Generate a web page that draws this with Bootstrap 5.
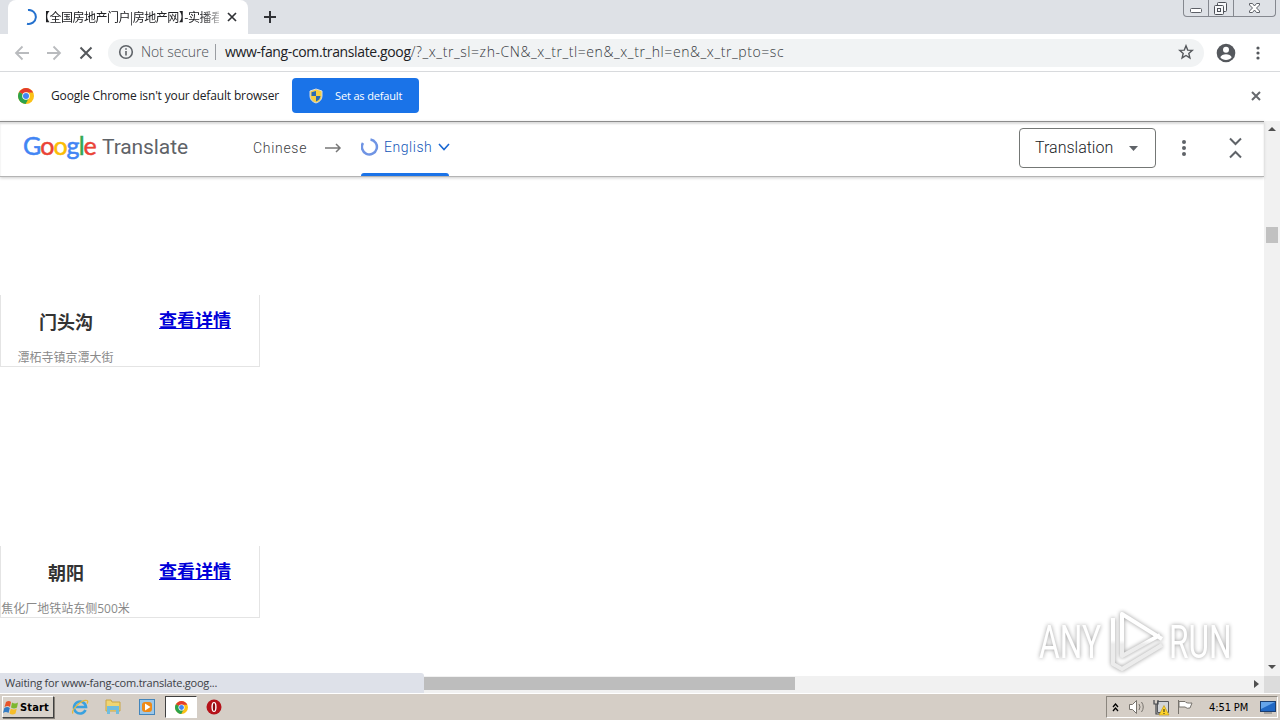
<!DOCTYPE html>
<html lang="en">
<head>
    <meta charset="UTF-8">
    <meta name="viewport" content="width=device-width, initial-scale=1.0">
    <title>Google Translate</title>
    <link href="https://cdn.jsdelivr.net/npm/bootstrap@5.3.0/dist/css/bootstrap.min.css" rel="stylesheet">
    <style>
        body { height: 720px; font-family: "Open Sans", "Noto Sans CJK SC", sans-serif; font-size: 12px; line-height: 1; color: #202124; }
        svg { display: block; flex: none; }
        .t { white-space: nowrap; flex: none; }

        /* browser frame */
        .tab-strip { height: 34px; background: #dee1e6; padding-left: 8px; }
        .tab { width: 240px; height: 34px; background: #fff; border-radius: 8px 8px 0 0; padding-left: 13px; }
        .tab-title { width: 175px; margin-left: 7px; font-family: "Noto Sans CJK SC", sans-serif; font-size: 12px; letter-spacing: -.5px; line-height: 18px; font-feature-settings: "halt"; -webkit-mask-image: linear-gradient(90deg, #000 90%, rgba(0, 0, 0, .3)); }
        .win-btns { height: 17px; margin-right: 4px; border: 1px solid #85888f; border-top: 0; border-radius: 0 0 4px 4px; }
        .win-btns > div + div { border-left: 1px solid #85888f; }
        .toolbar { height: 38px; border-bottom: 1px solid #d8dadd; }
        .omnibox { width: 1096px; height: 28px; border-radius: 14px; background: #f1f3f4; margin-left: 15px; padding: 0 10px 2px; font-size: 14px; line-height: 20px; }
        .sec { margin-left: 7px; width: 67px; color: #4c5055; font-weight: 300; letter-spacing: -.1px; }
        .sep { width: 1px; height: 16px; background: #9a9da2; margin: 0 9px 0 7px; }
        .host { letter-spacing: -.37px; }
        .query { color: #36393d; font-weight: 300; letter-spacing: .57px; }
        .infobar { height: 49px; padding-bottom: 2px; }
        .info { width: 229px; letter-spacing: -.15px; }
        .default-btn { width: 127px; height: 35px; background: #1a73e8; border-radius: 4px; color: #fff; font-size: 11px; letter-spacing: -.15px; padding: 0 0 0 16px; margin-left: 12px; }

        /* page */
        .viewport { height: 555px; }
        .translate-bar { height: 56px; border-top: 1px solid #8c8c8c; border-bottom: 1px solid #b4b4b4; box-shadow: inset 0 2px 2px #ddd, 0 1px 3px #ccc; padding-bottom: 2px; font-family: Roboto, sans-serif; color: #5f6368; }
        .logo { width: 74px; font-family: Lato, sans-serif; font-size: 25px; letter-spacing: -.95px; -webkit-text-stroke: .5px; margin: -5px 0 0 23px; }
        .trans { margin: -2px 0 0 5px; font-size: 21px; letter-spacing: -.1px; }
        .langs { left: 253px; top: 0; height: 55px; font-size: 14px; }
        .langs > *, .lang-tab > * { position: relative; }
        .lang-tab { width: 88px; height: 55px; padding-bottom: 3px; color: #1155b8; }
        .lang-tab::after { content: ""; position: absolute; bottom: 0; width: 88px; height: 3px; border-radius: 3px 3px 0 0; background: #1a73e8; }
        .mode { width: 137px; height: 40px; border: 1px solid #747775; border-radius: 4px; color: #202226; font-size: 16px; padding-left: 15px; }
        .spot { width: 260px; height: 72px; border: 1px solid #e4e4e4; border-top: 0; }
        .spot h3 { width: 130px; margin: 0; padding-top: 14px; text-align: center; font-size: 18px; line-height: 26px; font-weight: 700; color: #333; }
        .spot a { margin-left: 28px; padding-top: 12px; font-size: 18px; line-height: 26px; font-weight: 700; color: #0000d8; }
        .spot p { margin: 1px 0 0 -1px; width: 131px; text-align: center; white-space: nowrap; font-size: 12px; line-height: 18px; color: #8a8a8a; }
        .vscroll { width: 16px; background: #f1f1f1; }
        .vthumb { width: 12px; height: 16px; background: #c1c1c1; }
        .hscroll { height: 17px; background: #f1f1f1; }
        .hthumb { width: 371px; height: 13px; margin-bottom: 2px; background: #bdbdbd; }
        .status-text { width: 424px; height: 20px; margin-top: -3px; padding-left: 5px; background: #dee1e9; border-radius: 0 3px 0 0; color: #3c4045; font-size: 11px; letter-spacing: -.22px; line-height: 20px; }
        .watermark { right: 24px; bottom: 1px; filter: drop-shadow(0 0 2px #999); }

        /* taskbar */
        .taskbar { height: 27px; background: #d5cec6; border-top: 1px solid #fff; font-family: "DejaVu Sans Condensed", "DejaVu Sans", sans-serif; font-size: 11px; color: #000; }
        .start { width: 52px; height: 22px; margin-left: 2px; background: #d8d2ca; border: 1px solid; border-color: #fff #404040 #404040 #fff; box-shadow: 1px 1px 0 #858078; font-weight: 700; }
        .task-active { width: 32px; height: 22px; background: #fff; border: 1px solid; border-color: #404040 #fff #fff #404040; }
        .tray { width: 172px; height: 22px; border: 1px solid; border-color: #8b867e #fff #fff #8b867e; }
    </style>
</head>
<body class="d-flex flex-column overflow-hidden bg-white">
    <svg width="0" height="0" class="position-absolute">
        <symbol id="chrome" viewBox="0 0 16 16">
            <circle cx="8" cy="8" r="8" fill="#fbc116"/>
            <path d="M8 8 1.100 4A8 8 0 0 1 14.900 4.100L15 4.500H8z" fill="#e33b2e"/>
            <path d="M1.100 4A8 8 0 0 0 7.600 16L11 9.800 8 8z" fill="#2ba24c"/>
            <circle cx="8" cy="8" r="3.800" fill="#fff"/><circle cx="8" cy="8" r="3" fill="#4285f4"/>
        </symbol>
    </svg>

    <div class="tab-strip d-flex flex-shrink-0">
        <div class="tab d-flex align-items-center">
            <svg width="16" height="16" fill="none" stroke="#2471ce" stroke-width="2"><path d="M7 1a7 7 0 1 1-1 13.700"/></svg>
            <div class="tab-title t">【全国房地产门户|房地产网】-实播看</div>
            <svg class="ms-2" width="10" height="10" stroke="#303236" stroke-width="1.700"><path d="m1 1 8 8M9 1 1 9"/></svg>
        </div>
        <svg class="ms-3 align-self-center" width="12" height="12" stroke="#303236" stroke-width="2"><path d="M6 0v12M0 6h12"/></svg>
        <div class="win-btns d-flex ms-auto">
            <div><svg width="24" height="16" fill="#fff" stroke="#5d6067"><rect x="6.500" y="8.500" width="11" height="4" rx="1"/></svg></div>
            <div><svg width="24" height="16" fill="#f7f8fa" stroke="#4d5057"><rect x="8.500" y="2.500" width="9" height="9" rx="1"/><rect x="5.500" y="5.500" width="9" height="9" rx="1"/><rect x="8.500" y="8.500" width="3" height="3"/></svg></div>
            <div><svg width="41" height="16" fill="#fff" stroke="#5d6067"><path d="M15.500 3.500h3l2 2.500 2-2.500h3v1.500L22.500 8l3 3v1.500h-3l-2-2.500-2 2.500h-3V11l3-3-3-3z"/></svg></div>
        </div>
    </div>

    <div class="toolbar d-flex align-items-center flex-shrink-0">
        <svg style="margin-left:14px" width="16" height="16" fill="none" stroke="#b9bbbe" stroke-width="1.800"><path d="M15 8H2m6.500-6.500L2 8l6.500 6.500"/></svg>
        <svg style="margin-left:16px" width="16" height="16" fill="none" stroke="#b9bbbe" stroke-width="1.800"><path d="M1 8h13M7.500 1.500 14 8l-6.500 6.500"/></svg>
        <svg style="margin-left:17px" width="14" height="14" stroke="#55585c" stroke-width="2"><path d="m1.500 1.500 11 11M12.500 1.500l-11 11"/></svg>
        <div class="omnibox d-flex align-items-center">
            <svg width="16" height="16" fill="none" stroke="#5f6368" stroke-width="1.600"><circle cx="8" cy="8" r="6.300"/><path d="M8 7v4.500M8 4.200v1.600"/></svg>
            <span class="t sec">Not secure</span>
            <span class="sep"></span>
            <span class="t host">www-fang-com.translate.goog</span><span class="t query">/?_x_tr_sl=zh-CN&amp;_x_tr_tl=en&amp;_x_tr_hl=en&amp;_x_tr_pto=sc</span>
            <svg class="ms-auto" width="16" height="16" fill="none" stroke="#55585c" stroke-width="1.400"><path d="m8 1.800 1.700 4.300 4.600.3-3.500 3 1.100 4.500L8 11.500l-3.900 2.400 1.100-4.500-3.500-3 4.600-.3z"/></svg>
        </div>
        <svg style="margin-left:12px" width="20" height="20"><circle cx="10" cy="10" r="9.300" fill="#55585d"/><circle cx="10" cy="6.800" r="3" fill="#fff"/><path d="M4.300 14.300c1.300-4 10.100-4 11.400 0-2.400 3.600-9 3.600-11.400 0z" fill="#fff"/></svg>
        <svg style="margin-left:20px" width="4" height="14" fill="#55585d"><circle cx="2" cy="2" r="1.600"/><circle cx="2" cy="7" r="1.600"/><circle cx="2" cy="12" r="1.600"/></svg>
    </div>

    <div class="infobar d-flex align-items-center flex-shrink-0">
        <svg style="margin-left:18px" width="16" height="16"><use href="#chrome"/></svg>
        <span class="t info" style="margin-left:17px">Google Chrome isn't your default browser</span>
        <div class="default-btn d-flex align-items-center">
            <svg width="16" height="16"><path d="M8 1 14 3v5q0 5-6 7-6-2-6-7V3z" fill="#f5cf43"/><path d="M8 3v5H3.500V4.200zM8 8h4.500Q12 12 8 13.500z" fill="#296ab5"/><path d="M8 1 14 3v5q0 5-6 7-6-2-6-7V3z" fill="none" stroke="#d9dce0"/></svg>
            <span class="t" style="margin-left:11px">Set as default</span>
        </div>
        <svg class="ms-auto" style="margin-right:19px" width="10" height="10" stroke="#66696d" stroke-width="2"><path d="m1 1 8 8M9 1 1 9"/></svg>
    </div>

    <div class="viewport d-flex flex-shrink-0">
        <main class="flex-grow-1 position-relative">
            <div class="translate-bar d-flex align-items-center">
                <span class="logo t"><span style="color:#4285f4">G</span><span style="color:#ea4335">o</span><span style="color:#fbbc05">o</span><span style="color:#4285f4">g</span><span style="color:#34a853">l</span><span style="color:#ea4335">e</span></span>
                <span class="t trans">Translate</span>
                <div class="langs d-flex align-items-center position-absolute">
                    <span class="t" style="width:54px;padding-bottom:2px;font-weight:300;color:#3c4043;letter-spacing:.7px">Chinese</span>
                    <svg style="margin:0 0 2px 18px" width="17" height="10" fill="none" stroke="#777" stroke-width="1.500"><path d="M0 5h15M11 1l4 4-4 4"/></svg>
                    <div class="lang-tab d-flex align-items-center" style="margin-left:19px">
                        <svg width="18" height="18" fill="none" stroke="#6f94e4" stroke-width="2.500"><path d="M9.500 1.500A7.500 7.500 0 1 1 2 5"/></svg>
                        <span class="t" style="margin-left:5px;width:48px;font-weight:300;letter-spacing:.55px">English</span>
                        <svg style="margin-left:6px" width="12" height="8" fill="none" stroke="#1967d2" stroke-width="1.600"><path d="m1 1 5 5.500L11 1"/></svg>
                    </div>
                </div>
                <div class="mode d-flex align-items-center ms-auto">
                    <span class="t" style="width:78px;font-weight:300">Translation</span>
                    <svg style="margin-left:16px" width="9" height="5" fill="#5f6368"><path d="M0 0h9L4.500 5z"/></svg>
                </div>
                <svg style="margin-left:26px" width="4" height="16" fill="#5f6368"><circle cx="2" cy="2" r="2"/><circle cx="2" cy="8" r="2"/><circle cx="2" cy="14" r="2"/></svg>
                <svg style="margin:0 22px 0 43px" width="13" height="22" fill="none" stroke="#5f6368" stroke-width="2"><path d="m1 1.500 5.500 5.500L12 1.500M1 20.500 6.500 15l5.500 5.500"/></svg>
            </div>
            <div class="spot" style="margin-top:118px">
                <div class="d-flex" style="height:53px"><h3>门头沟</h3><a href="#">查看详情</a></div>
                <p>潭柘寺镇京潭大街</p>
            </div>
            <div class="spot" style="margin-top:179px">
                <div class="d-flex" style="height:53px"><h3>朝阳</h3><a href="#">查看详情</a></div>
                <p>焦化厂地铁站东侧500米</p>
            </div>
            <svg class="watermark position-absolute" width="210" height="70">
                <linearGradient id="wm" gradientUnits="userSpaceOnUse" x1="0" y1="0" x2="0" y2="70">
                    <stop offset=".5" stop-color="#fff"/><stop offset=".56" stop-color="#ececec"/>
                </linearGradient>
                <g fill="url(#wm)" font-family="Roboto, sans-serif" font-size="46">
                    <text transform="translate(9 53) scale(.69 1)">ANY</text>
                    <text transform="translate(139 53) scale(.69 1)">RUN</text>
                </g>
                <g fill="none" stroke="url(#wm)" stroke-width="4" stroke-linejoin="round"><path d="M132 34 92 9v42l38-21M83 13v46l9 5 40-24"/></g>
            </svg>
        </main>
        <div class="vscroll d-flex flex-column align-items-center">
            <svg style="margin-top:6px" width="8" height="4" fill="#505050"><path d="M0 4h8L4 0z"/></svg>
            <div class="vthumb" style="margin-top:96px"></div>
            <svg class="mt-auto" style="margin-bottom:7px" width="8" height="4" fill="#505050"><path d="M0 0h8L4 4z"/></svg>
        </div>
    </div>
    <div class="hscroll d-flex align-items-center flex-shrink-0">
        <div class="status-text t align-self-start">Waiting for www-fang-com.translate.goog...</div>
        <div class="hthumb"></div>
        <svg class="ms-auto" style="margin-bottom:2px" width="5" height="8" fill="#505050"><path d="M0 0v8l5-4z"/></svg>
        <div style="width:16px;height:17px;margin-left:5px;background:#dcdcdc"></div>
    </div>

    <div class="taskbar d-flex align-items-center flex-shrink-0">
        <div class="start d-flex align-items-center">
            <svg width="17" height="17"><path d="M3 3q3-2 5 0L7 8Q5 6 1.500 8z" fill="#e8552b"/><path d="M9 3.500q3 2 6 0L14 8.500q-3 2-6 0z" fill="#7db72f"/><path d="M1.300 9q3-2 5.500 0L5.500 14Q3 12 0 14z" fill="#347cc4"/><path d="M7.800 9.500q3 2 6 0l-1.300 5q-3 2-6 0z" fill="#f6bd28"/></svg>
            <span class="t" style="letter-spacing:.15px">Start</span>
        </div>
        <svg style="margin-left:17px" width="18" height="18" fill="none"><path d="M14.500 12a6 6 0 1 1 .5-3H5" stroke="#39a1df" stroke-width="2.600"/><path d="M2 15.500C-.5 12 11 1 16 2.500q1.500 1 0 3" stroke="#e6b93a" stroke-width="1.300"/></svg>
        <svg style="margin-left:16px" width="16" height="18"><path d="M1 2h5l1 2h8v9H1z" fill="#f0d572" stroke="#c9a646"/><path d="M2 16V8h12v8h-3v-4H5v4z" fill="#70bddf"/></svg>
        <svg style="margin-left:18px" width="16" height="16"><rect x=".5" y=".5" width="15" height="15" fill="#9cc7e8" stroke="#4385bb"/><rect x="3" y="3" width="10" height="10" rx="3" fill="#ef8a17"/><path d="M6 4.500v7L11.500 8z" fill="#fff"/></svg>
        <div class="task-active d-flex align-items-center justify-content-center" style="margin-left:10px"><svg width="13" height="13"><use href="#chrome"/></svg></div>
        <svg style="margin-left:9px" width="16" height="16"><circle cx="8" cy="8" r="7.500" fill="#b51219"/><ellipse cx="8" cy="8" rx="2.600" ry="5" fill="#fff"/><ellipse cx="8" cy="8" rx="1.200" ry="4" fill="#8a0b10"/></svg>
        <div class="tray d-flex align-items-center ms-auto" style="margin-right:2px">
            <svg style="margin-left:5px" width="7" height="9" fill="none" stroke="#000" stroke-width="1.300"><path d="M1 4l2.500-3L6 4M1 8l2.500-3L6 8"/></svg>
            <svg style="margin-left:10px" width="16" height="16" fill="#fff" stroke="#77736d"><path d="M.5 5.500h3l4-4v13l-4-4h-3z"/><path d="M10 5q2 3 0 6M12.500 3q3.500 5 0 10" fill="none"/></svg>
            <svg style="margin-left:8px" width="17" height="17"><path d="M4.500 2.500h11v11h-11z" fill="#d2d5d8" stroke="#55585c"/><path d="M1 1v4h4V1M3 5v10h5" fill="none" stroke="#44474b" stroke-width="1.200"/><path d="m11 6.500 5 9.500H6z" fill="#ffd42a" stroke="#b99210" stroke-width=".6"/><path d="M11 10v3M11 14v1" stroke="#222"/></svg>
            <svg style="margin-left:7px" width="17" height="16" fill="#fff" stroke="#77736d"><path d="M1.500 1v14M2 2.500h6q1 2 7 1.500l-2 5q-3 1-5-1H2z"/></svg>
            <span class="t" style="margin-left:15px;letter-spacing:-.1px">4:51 PM</span>
            <svg class="ms-auto" style="margin-right:1px" width="16" height="14"><rect x=".5" y="1.500" width="15" height="10" fill="#2168c4" stroke="#1b3e70"/><path d="M1 2h14L1 9z" fill="#65a4ea"/><path d="M4 13h8" stroke="#777"/></svg>
        </div>
    </div>
    <script src="https://cdn.jsdelivr.net/npm/bootstrap@5.3.0/dist/js/bootstrap.bundle.min.js"></script>
</body>
</html>
